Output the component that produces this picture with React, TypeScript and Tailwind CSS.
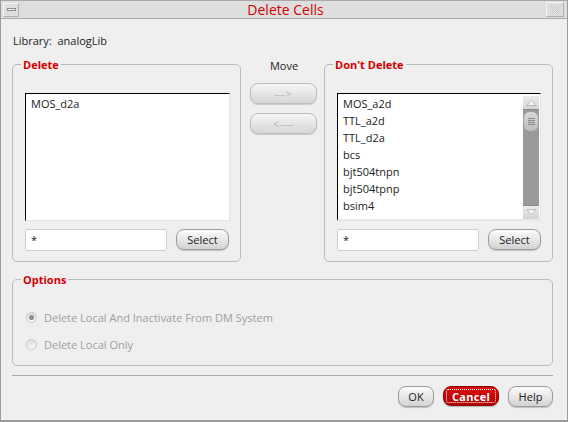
import React from 'react';

const rightItems = ['MOS_a2d', 'TTL_a2d', 'TTL_d2a', 'bcs', 'bjt504tnpn', 'bjt504tpnp', 'bsim4', 'bsim4ptm'];

function Btn({ children, className = '' }: { children: React.ReactNode; className?: string }) {
  return (
    <div
      className={`h-[21px] flex items-center justify-center rounded-[8px] border border-[#9c9c9c] bg-linear-to-b from-[#fcfcfc] to-[#d2d2d2] shadow-[0_1px_1px_rgba(0,0,0,0.2)] text-[11px] leading-[13px] text-[#222] ${className}`}
    >
      {children}
    </div>
  );
}

function Group({ title, className = '', children }: { title: string; className?: string; children: React.ReactNode }) {
  return (
    <div className={`relative border border-[#bcbcbc] rounded-[5px] ${className}`}>
      <span className="absolute -top-[7px] left-[8px] px-[2px] bg-[#efefef] text-[11px] leading-[13px] font-bold text-[#d40000]">
        {title}
      </span>
      {children}
    </div>
  );
}

function Filter() {
  return (
    <div className="flex items-start gap-[9px] mt-[8px]">
      <div className="w-[142px] h-[22px] bg-white border border-[#cfcfcf] rounded-[3px] pl-[5px] text-[11px] leading-[20px]">*</div>
      <Btn className="w-[53px]">Select</Btn>
    </div>
  );
}

function Radio({ checked, label }: { checked?: boolean; label: string }) {
  return (
    <div className="flex items-center h-[17px] gap-[7px]">
      <div className="w-[11px] h-[11px] rounded-full border border-[#c8c8c8] bg-linear-to-b from-[#dcdcdc] to-[#fafafa] flex items-center justify-center">
        {checked && <div className="w-[5px] h-[5px] rounded-full bg-[#8c8c8c]" />}
      </div>
      <span className="text-[11px] leading-[13px] text-[#a0a0a0]">{label}</span>
    </div>
  );
}

export default function App() {
  return (
    <div className="w-[568px] h-[422px] bg-[#efefef] border-x border-b-2 border-[#9c9c9c] flex flex-col font-['Open_Sans',sans-serif] text-[11px] text-[#222] overflow-hidden">
      {/* title bar */}
      <div className="h-[19px] shrink-0 bg-[#dedede] border-t border-b border-[#a8a8a8] flex items-center">
        <div className="ml-[2px] w-[16px] h-[14px] border border-[#f6f6f6] border-r-[#b0b0b0] border-b-[#b0b0b0] flex items-center justify-center">
          <div className="w-[9px] h-[3px] border border-[#8a8a8a] bg-[#f4f4f4]" />
        </div>
        <div className="flex-1 text-center text-[14px] leading-[17px] text-[#d40000] pl-[6px]">Delete Cells</div>
        <div className="mr-[3px] w-[18px] h-[15px] border border-[#f6f6f6] border-r-[#b0b0b0] border-b-[#b0b0b0] flex items-center justify-center">
          <svg width="11" height="11" viewBox="0 0 11 11">
            <path d="M1 1 L10 10 M10 1 L1 10" stroke="#c4c4c4" strokeWidth="2.4" />
            <path d="M1 1 L10 10 M10 1 L1 10" stroke="#f4f4f4" strokeWidth="0.9" />
          </svg>
        </div>
      </div>

      <div className="flex-1 flex flex-col pl-[11px] pr-[14px]">
        <div className="mt-[15px] h-[13px] leading-[13px] pl-[1px]">Library:&nbsp;&nbsp;analogLib</div>

        {/* lists */}
        <div className="mt-[17px] flex h-[198px]">
          <Group title="Delete" className="w-[229px] pt-[28px] pl-[12px] pr-[10px] pb-[10px]">
            <div className="w-[205px] h-[128px] bg-white border border-t-black border-l-black border-r-[#e4e4e4] border-b-[#e4e4e4] pl-[5px] pt-[1px]">
              <div className="h-[17px] leading-[17px]">MOS_d2a</div>
            </div>
            <Filter />
          </Group>

          <div className="w-[83px] flex flex-col items-center">
            <div className="-mt-[5px] h-[13px] leading-[13px] pl-[3px]">Move</div>
            <div className="mt-[11px] w-[67px] h-[21px] ml-[1px] rounded-[8px] border border-[#bcbcbc] bg-linear-to-b from-[#f6f6f6] to-[#d6d6d6] shadow-[0_1px_1px_rgba(0,0,0,0.15)] flex items-center justify-center text-[11px] text-[#b8b8b8] leading-[13px]">
              ---&gt;
            </div>
            <div className="mt-[9px] w-[67px] h-[21px] ml-[1px] rounded-[8px] border border-[#bcbcbc] bg-linear-to-b from-[#f6f6f6] to-[#d6d6d6] shadow-[0_1px_1px_rgba(0,0,0,0.15)] flex items-center justify-center text-[11px] text-[#b8b8b8] leading-[13px]">
              &lt;----
            </div>
          </div>

          <Group title="Don't Delete" className="w-[229px] pt-[28px] pl-[12px] pr-[11px] pb-[10px]">
            <div className="w-[204px] h-[128px] bg-white border border-b-2 border-t-black border-l-black border-r-[#e4e4e4] border-b-[#e8e8e8] flex">
              <div className="flex-1 overflow-hidden pl-[5px] pt-[1px]">
                {rightItems.map((it) => (
                  <div key={it} className="h-[17px] leading-[17px]">
                    {it}
                  </div>
                ))}
              </div>
              <div className="w-[16px] mt-[2px] mr-[1px] flex flex-col bg-[#9a9a9a]">
                <div className="h-[14px] bg-linear-to-b from-[#ececec] to-[#d4d4d4] border-b border-[#8a8a8a] flex items-center justify-center">
                  <svg width="11" height="7" viewBox="0 0 11 7">
                    <path d="M1 6.5 L5.5 1 L10 6.5 Z" fill="#f4f4f4" stroke="#b0b0b0" strokeWidth="0.8" />
                  </svg>
                </div>
                <div className="mt-[1px] h-[21px] rounded-[7px] bg-linear-to-b from-[#d8d8d8] to-[#bdbdbd] border border-[#9c9c9c] flex flex-col items-center justify-center gap-[1px]">
                  <div className="w-[7px] h-px bg-[#8c8c8c]" />
                  <div className="w-[7px] h-px bg-[#8c8c8c]" />
                  <div className="w-[7px] h-px bg-[#8c8c8c]" />
                  <div className="w-[7px] h-px bg-[#8c8c8c]" />
                </div>
                <div className="flex-1" />
                <div className="h-[14px] bg-linear-to-b from-[#ececec] to-[#d4d4d4] border-t border-[#8a8a8a] flex items-center justify-center">
                  <svg width="11" height="7" viewBox="0 0 11 7">
                    <path d="M1 0.5 L5.5 6 L10 0.5 Z" fill="#f4f4f4" stroke="#b0b0b0" strokeWidth="0.8" />
                  </svg>
                </div>
              </div>
            </div>
            <Filter />
          </Group>
        </div>

        {/* options */}
        <Group title="Options" className="mt-[17px] h-[87px] pl-[13px] pt-[29px] flex flex-col gap-[10px]">
          <Radio checked label="Delete Local And Inactivate From DM System" />
          <Radio label="Delete Local Only" />
        </Group>

        <div className="mt-[9px] h-px bg-[#acacac]" />

        <div className="mt-[10px] flex justify-end gap-[9px]">
          <Btn className="w-[36px] h-[20px]">OK</Btn>
          <div className="w-[56px] h-[20px] rounded-[8px] border border-[#8a0000] bg-linear-to-b from-[#dc1010] to-[#b00000] shadow-[0_1px_1px_rgba(0,0,0,0.25)] p-[2px]">
            <div className="w-full h-full border border-dotted border-white rounded-[2px] flex items-center justify-center text-white font-bold text-[11px] leading-[13px] tracking-[0.3px]">
              Cancel
            </div>
          </div>
          <Btn className="w-[45px] h-[20px]">Help</Btn>
        </div>
      </div>
    </div>
  );
}
